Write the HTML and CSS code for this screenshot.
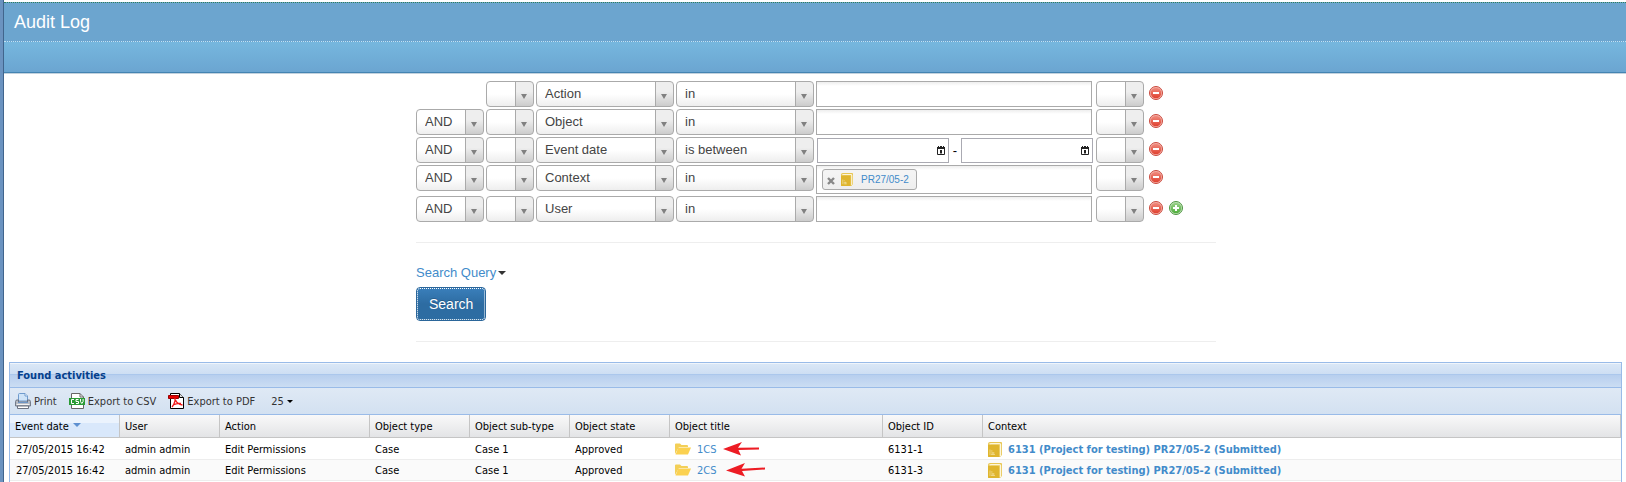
FILE: index.html
```
<!DOCTYPE html>
<html lang="en">
<head>
<meta charset="utf-8">
<title>Audit Log</title>
<link rel="stylesheet" href="styles.css">
</head>
<body>
<svg width="0" height="0" class="defs" aria-hidden="true">
  <defs>
    <linearGradient id="red" x1="0" y1="0" x2="0" y2="1"><stop offset="0" stop-color="#f08d80"/><stop offset="1" stop-color="#e0402f"/></linearGradient>
    <linearGradient id="green" x1="0" y1="0" x2="0" y2="1"><stop offset="0" stop-color="#9ad08a"/><stop offset="1" stop-color="#4fae3c"/></linearGradient>
    <symbol id="minus" viewBox="0 0 14 14"><circle cx="7" cy="7" r="6.5" fill="#f6b5ad" stroke="#c9483c"/><circle cx="7" cy="7" r="5.3" fill="url(#red)"/><rect x="4" y="6" width="6" height="2" fill="#fff"/></symbol>
    <symbol id="plus" viewBox="0 0 14 14"><circle cx="7" cy="7" r="6.5" fill="#c4e4bb" stroke="#4c9440"/><circle cx="7" cy="7" r="5.3" fill="url(#green)"/><path d="M6 4h2v2h2v2H8v2H6V8H4V6h2z" fill="#fff"/></symbol>
    <symbol id="cal" viewBox="0 0 8 10"><path d="M.5 2.5h7v6h-7z" fill="#fff" stroke="#222"/><path d="M0 1h1V0h1v1h1V0h2v1h1V0h1v1h1v2H0z" fill="#222"/><path d="M3 4h2v3.500H3z" fill="#222"/></symbol>
    <symbol id="book" viewBox="0 0 14 15"><path d="M0 15V2Q0 0 2 0h11q1 0 1 1v12.500h-1.500V15z" fill="#e8c654"/><path d="M1.500 2Q2 1.600 3 1.600h8.500q1 0 1 1V14" fill="none" stroke="#fcf6dc" stroke-width="1.300"/><path d="M0 3h10q1 0 1 1v11H1q-1 0-1-1z" fill="#dfb52e"/><path d="M2 7.500V13M3 9h1.500M5 10v3M3 11h3.500M3 12.500h4" stroke="#f1dd95" fill="none" stroke-width=".8"/></symbol>
    <symbol id="folder" viewBox="0 0 16 12"><path d="M0 11V1.500Q0 .5 1 .5h4l1.500 1.500H12q1 0 1 1V4H4z" fill="#f3cf57"/><path d="M3.300 4.500H16L13 11.500H.5z" fill="#fbd150"/></symbol>
  </defs>
</svg>
<div class="page">
  <header class="top">
    <h1 class="title">Audit Log</h1>
    <div class="subbar"></div>
  </header>
  <main class="content">
    <form class="search" onsubmit="return false">
      <div class="rows">
        <div class="row">
          <span class="w-op"></span>
          <select class="pick w-small" aria-label="Open bracket"><option></option><option>(</option></select>
          <select class="pick w-wide" aria-label="Field"><option>Action</option></select>
          <select class="pick w-wide" aria-label="Condition"><option>in</option></select>
          <div class="value"><input class="box" type="text" aria-label="Action value"></div>
          <select class="pick w-small" aria-label="Close bracket"><option></option><option>)</option></select>
          <div class="tools"><button type="button" aria-label="Remove condition"><svg><use href="#minus"/></svg></button></div>
        </div>
        <div class="row">
          <select class="pick w-op" aria-label="Operator"><option>AND</option><option>OR</option></select>
          <select class="pick w-small" aria-label="Open bracket"><option></option><option>(</option></select>
          <select class="pick w-wide" aria-label="Field"><option>Object</option></select>
          <select class="pick w-wide" aria-label="Condition"><option>in</option></select>
          <div class="value"><input class="box" type="text" aria-label="Object value"></div>
          <select class="pick w-small" aria-label="Close bracket"><option></option><option>)</option></select>
          <div class="tools"><button type="button" aria-label="Remove condition"><svg><use href="#minus"/></svg></button></div>
        </div>
        <div class="row">
          <select class="pick w-op" aria-label="Operator"><option>AND</option><option>OR</option></select>
          <select class="pick w-small" aria-label="Open bracket"><option></option><option>(</option></select>
          <select class="pick w-wide" aria-label="Field"><option>Event date</option></select>
          <select class="pick w-wide" aria-label="Condition"><option>is between</option></select>
          <div class="value dates">
            <div class="date"><input type="text" aria-label="Date from"><button type="button" aria-label="Pick start date"><svg><use href="#cal"/></svg></button></div>
            <span class="dash">-</span>
            <div class="date"><input type="text" aria-label="Date to"><button type="button" aria-label="Pick end date"><svg><use href="#cal"/></svg></button></div>
          </div>
          <select class="pick w-small" aria-label="Close bracket"><option></option><option>)</option></select>
          <div class="tools"><button type="button" aria-label="Remove condition"><svg><use href="#minus"/></svg></button></div>
        </div>
        <div class="row">
          <select class="pick w-op" aria-label="Operator"><option>AND</option><option>OR</option></select>
          <select class="pick w-small" aria-label="Open bracket"><option></option><option>(</option></select>
          <select class="pick w-wide" aria-label="Field"><option>Context</option></select>
          <select class="pick w-wide" aria-label="Condition"><option>in</option></select>
          <div class="value">
            <div class="box chips">
              <span class="chip">
                <button type="button" aria-label="Remove PR27/05-2"><svg viewBox="0 0 8 8"><path d="M1 1l6 6M7 1L1 7" stroke="#888" stroke-width="2.400"/></svg></button>
                <svg class="book"><use href="#book"/></svg>
                <a href="#">PR27/05-2</a>
              </span>
              <input type="text" aria-label="Context value">
            </div>
          </div>
          <select class="pick w-small" aria-label="Close bracket"><option></option><option>)</option></select>
          <div class="tools"><button type="button" aria-label="Remove condition"><svg><use href="#minus"/></svg></button></div>
        </div>
        <div class="row">
          <select class="pick w-op" aria-label="Operator"><option>AND</option><option>OR</option></select>
          <select class="pick w-small" aria-label="Open bracket"><option></option><option>(</option></select>
          <select class="pick w-wide" aria-label="Field"><option>User</option></select>
          <select class="pick w-wide" aria-label="Condition"><option>in</option></select>
          <div class="value"><input class="box" type="text" aria-label="User value"></div>
          <select class="pick w-small" aria-label="Close bracket"><option></option><option>)</option></select>
          <div class="tools"><button type="button" aria-label="Remove condition"><svg><use href="#minus"/></svg></button><button type="button" aria-label="Add condition"><svg><use href="#plus"/></svg></button></div>
        </div>
      </div>
      <hr>
      <a class="query" href="#">Search Query<span class="caret"></span></a>
      <button class="submit" type="submit">Search</button>
      <hr>
    </form>
    <section class="panel">
      <h2 class="panel-title">Found activities</h2>
      <div class="toolbar">
        <button type="button"><svg viewBox="0 0 16 16"><path d="M3.500 8V1.500Q3.500.5 4.500.5H10L12.500 3v5z" fill="#cfe4f8" stroke="#6f9bcd"/><path d="M10 .5V3h2.500" fill="#fff" stroke="#6f9bcd"/><path d="M.6 8.500Q.6 7 2 7h1.500v2h9V7H14q1.400 0 1.400 1.500v4.500H.6z" fill="#b9bdc5" stroke="#6b7280"/><path d="M3 9.500h10" stroke="#6d95c5"/><path d="M1.500 11.500h13" stroke="#f2f2f2"/><path d="M2.500 13h11v2.500h-11z" fill="#fff" stroke="#6b7280"/></svg>Print</button>
        <button type="button"><svg viewBox="0 0 16 16"><path d="M2.500 15.500V.5H11L14.500 4v11.500z" fill="#fff" stroke="#666"/><path d="M11 .5V4h3.500" fill="none" stroke="#666"/><path d="M0 5h16v7H0z" fill="#299b35"/><path d="M5 6.500H2.500v4H5M9.500 6.500H7v2h2.500v2H7M11.500 6v2.500l1.300 2 1.300-2V6" fill="none" stroke="#fff"/></svg>Export to CSV</button>
        <button type="button"><svg viewBox="0 0 16 16"><path d="M2.500 15.500V.5h9l4 4v11z" fill="#fff" stroke="#000"/><path d="M11.500.5v4h4" fill="#ddd" stroke="#000"/><path d="M.5 2.500h10v3H.5z" fill="#e60000" stroke="#900"/><path d="M7 5v3Q6 12 4 14M7.500 7q1.500 4 7 5M5 12q4-2 8-1.500" fill="none" stroke="#f01818" stroke-width="1.300"/></svg>Export to PDF</button>
        <button type="button" class="size">25<span class="caret small"></span></button>
      </div>
      <table class="grid">
        <colgroup><col class="c110"><col class="c100"><col class="c150"><col class="c100"><col class="c100"><col class="c100"><col class="c213"><col class="c100"><col></colgroup>
        <thead>
          <tr><th class="sorted">Event date<svg viewBox="0 0 8 4"><path d="M0 0h8L4 4z" fill="#5d8fd0"/></svg></th><th>User</th><th>Action</th><th>Object type</th><th>Object sub-type</th><th>Object state</th><th>Object title</th><th>Object ID</th><th>Context</th></tr>
        </thead>
        <tbody>
          <tr><td>27/05/2015 16:42</td><td>admin admin</td><td>Edit Permissions</td><td>Case</td><td>Case 1</td><td>Approved</td>
            <td><div class="item"><svg class="folder"><use href="#folder"/></svg><a href="#">1CS</a><svg class="arrow" viewBox="0 0 42 14"><path d="M0 7L19 0L15 5.800L36 5.500V7.500L15.500 8L18 13.500z" fill="#ed1c24"/></svg></div></td>
            <td>6131-1</td><td><div class="item"><svg class="book"><use href="#book"/></svg><a class="strong" href="#">6131 (Project for testing) PR27/05-2 (Submitted)</a></div></td></tr>
          <tr><td>27/05/2015 16:42</td><td>admin admin</td><td>Edit Permissions</td><td>Case</td><td>Case 1</td><td>Approved</td>
            <td><div class="item"><svg class="folder"><use href="#folder"/></svg><a href="#">2CS</a><svg class="arrow" viewBox="0 0 42 14"><path d="M3 7.500L22 0L18.500 5.700L42 4.500V6.500L19 8L22 13.500z" fill="#ed1c24"/></svg></div></td>
            <td>6131-3</td><td><div class="item"><svg class="book"><use href="#book"/></svg><a class="strong" href="#">6131 (Project for testing) PR27/05-2 (Submitted)</a></div></td></tr>
        </tbody>
      </table>
    </section>
  </main>
</div>
</body>
</html>
```
FILE: styles.css
```
* { box-sizing: border-box; }
body {
  margin: 0;
  background: #fff;
  color: #000;
  font-family: "Liberation Sans", Arial, sans-serif;
  font-size: 13px;
}
a { color: #428bca; text-decoration: none; }
button { margin: 0; padding: 0; border: 0; background: none; font: inherit; color: inherit; }
input { margin: 0; border: 0; padding: 0 5px; font: inherit; min-width: 0; outline: 0; }
svg { display: block; flex: none; }
.defs { position: absolute; }

.page {
  display: flex;
  flex-direction: column;
  min-height: 100vh;
  padding-left: 4px;
  background: linear-gradient(90deg, #6b93c0 3px, #41658d 3px) no-repeat left / 4px 100%;
}
.top { border-top: 2px solid #fff; border-bottom: 1px solid #4484b2; box-shadow: 0 1px 0 #c3d2de; }
.title {
  margin: 0;
  padding: 0 10px;
  border-top: 1px dotted #2f7f5c;
  background: #6ca5cf;
  color: #fff;
  font-size: 18px;
  font-weight: 400;
  line-height: 38px;
}
.subbar { height: 31px; border-top: 1px dotted #c2e1f3; background: linear-gradient(#76b7de, #6ba5d1); }

.content { flex: 1; display: flex; flex-direction: column; padding: 8px 4px 0 5px; }
.search { width: 100%; max-width: 801px; margin: 0 auto; padding-left: 1px; }
.rows { display: flex; flex-direction: column; gap: 2px; }
.row { display: flex; align-items: flex-start; gap: 2px; }
.w-op { width: 68px; }
.w-small { width: 48px; }
.w-wide { width: 138px; }
.pick {
  appearance: none;
  height: 26px;
  margin: 0;
  padding: 0 20px 2px 8px;
  border: 1px solid #aaa;
  border-radius: 4px;
  color: #444;
  font: inherit;
  background:
    url("data:image/svg+xml,%3Csvg xmlns='http://www.w3.org/2000/svg' width='6' height='5'%3E%3Cpath d='M0 0h6L3 5z' fill='%23808080'/%3E%3C/svg%3E") no-repeat right 6px top 12px,
    linear-gradient(#aaa, #aaa) no-repeat right 17px top 0 / 1px 100%,
    linear-gradient(#eee 40%, #ccc) no-repeat right / 17px 100%,
    linear-gradient(#fff 50%, #eee);
}
.value { width: 278px; }
.box {
  display: block;
  width: 276px;
  height: 26px;
  border: 1px solid #aaa;
  background: linear-gradient(#eee, #fff 4px);
}
.dates { display: flex; padding: 1px 0 0 1px; }
.date { display: flex; align-items: center; width: 132px; height: 25px; padding-right: 3px; border: 1px solid #aaaab2; background: #fff; }
.date input { flex: 1; }
.date svg { width: 8px; height: 10px; }
.dash { width: 12px; line-height: 25px; text-align: center; }
.chips { display: flex; align-items: center; height: auto; padding: 3px 5px; }
.chips input { flex: 1; background: none; }
.chip {
  display: flex;
  align-items: center;
  gap: 6px;
  height: 21px;
  padding: 0 7px 0 4px;
  border: 1px solid #aaa;
  border-radius: 3px;
  background: linear-gradient(#f4f4f4 20%, #eee);
  font-size: 10px;
}
.chip button svg { width: 8px; height: 8px; margin-top: 3px; }
.chip a { margin-left: 2px; }
.chip .book { width: 12px; height: 13px; }
.tools { display: flex; gap: 6px; padding: 5px 0 0 3px; }
.tools svg { width: 14px; height: 14px; }

hr { margin: 20px 0; border: 0; border-top: 1px solid #eee; }
.query { display: flex; align-items: center; width: max-content; line-height: 20px; }
.caret { margin: 0 0 0 2px; border: 4px solid transparent; border-top-color: #333; border-bottom: 0; }
.submit {
  display: block;
  height: 34px;
  margin-top: 4px;
  padding: 0 12px;
  border: 1px solid #2b669a;
  border-radius: 4px;
  background: linear-gradient(#3a7fbb, #2d6ca2 50%);
  color: #fff;
  font-size: 14px;
  outline: 1px dotted #fff;
  outline-offset: -2px;
  text-shadow: 0 -1px 0 rgba(0, 0, 0, .2);
}

.panel {
  flex: 1;
  border: 1px solid #99bbe8;
  border-bottom: 0;
  font-family: "DejaVu Sans Condensed", Tahoma, "DejaVu Sans", sans-serif;
  font-size: 11px;
}
.panel-title {
  margin: 0;
  padding: 0 7px;
  border-top: 1px solid #f0f5fb;
  border-bottom: 1px solid #99bbe8;
  background: linear-gradient(#dae7f6, #cddef3 45%, #abc7ec 45%, #abc7ec 48%, #b8cfee 50%, #cbddf3);
  color: #04408c;
  font-size: 11px;
  line-height: 23px;
}
.toolbar {
  display: flex;
  align-items: center;
  gap: 12px;
  height: 27px;
  padding: 0 5px;
  border-bottom: 1px solid #99bbe8;
  background: linear-gradient(#dfe9f5, #d3e1f1);
  color: #333;
}
.toolbar button { display: flex; align-items: center; gap: 3px; }
.toolbar svg { width: 16px; height: 16px; }
.toolbar .size { margin-left: 4px; }
.caret.small { margin: 0; border-width: 3px 3px 0; border-top-color: #000; }

.grid { width: 100%; table-layout: fixed; border-collapse: separate; border-spacing: 0; }
.c100 { width: 100px; }
.c110 { width: 110px; }
.c150 { width: 150px; }
.c213 { width: 213px; }
.grid th {
  height: 23px;
  padding: 0 5px;
  border-right: 1px solid #c5c5c5;
  border-bottom: 1px solid #c5c5c5;
  background: linear-gradient(#f9f9f9, #e3e4e6);
  font-weight: 400;
  text-align: left;
  white-space: nowrap;
}
.grid .sorted { background: linear-gradient(#ebf3fd 35%, #d9e8fb 35%); }
.sorted svg { display: inline-block; width: 8px; height: 4px; margin-left: 4px; vertical-align: 3px; }
.grid td { height: 21px; padding: 0 5px; border-bottom: 1px solid #ededed; white-space: nowrap; }
.grid td:first-child { padding-left: 6px; }
.grid tbody tr:first-child td { height: 22px; padding-top: 1px; }
.grid tbody tr:nth-child(even) { background: #fafafa; }
.item { display: flex; align-items: center; gap: 6px; }
.folder { width: 16px; height: 12px; }
.item .book { width: 14px; height: 15px; }
.arrow { width: 42px; height: 14px; }
.strong { font-weight: 700; }
```
